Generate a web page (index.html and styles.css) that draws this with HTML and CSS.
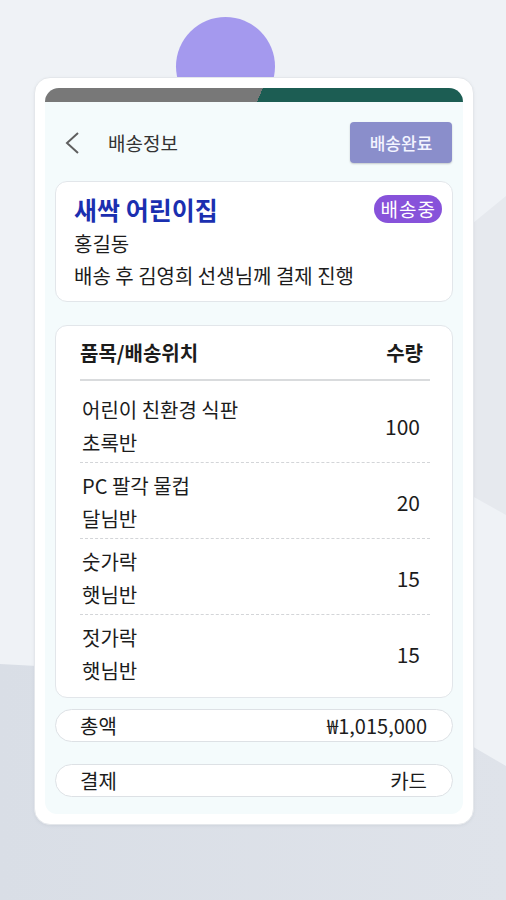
FILE: index.html
```html
<!DOCTYPE HTML>
<html>

<head>
  <meta charset="utf-8">
  <link rel="stylesheet" href="styles.css">
</head>

<body>
  <div class="backdrop">
    <div class="bg-wedge"></div>
    <div class="bg-bottom"></div>
    <div class="bubble"></div>
  </div>

  <div class="card">
    <div class="panel">
      <div class="progress"></div>

      <div class="header">
        <svg class="back" width="14" height="22" viewBox="0 0 14 22">
          <polyline points="13,1 2,11 13,21" fill="none" stroke="#5f5f5f" stroke-width="2"/>
        </svg>
        <span class="header-title">배송정보</span>
        <button class="done-btn">배송완료</button>
      </div>

      <div class="content">
        <div class="info-card">
          <div class="info-top">
            <span class="place">새싹 어린이집</span>
            <span class="badge">배송중</span>
          </div>
          <div class="info-line">홍길동</div>
          <div class="info-line">배송 후 김영희 선생님께 결제 진행</div>
        </div>

        <div class="items-card">
          <div class="items-head">
            <span>품목/배송위치</span>
            <span>수량</span>
          </div>
          <div class="items-list">
            <div class="item">
              <div>
                <div class="item-line">어린이 친환경 식판</div>
                <div class="item-line">초록반</div>
              </div>
              <span class="qty">100</span>
            </div>
            <div class="item">
              <div>
                <div class="item-line">PC 팔각 물컵</div>
                <div class="item-line">달님반</div>
              </div>
              <span class="qty">20</span>
            </div>
            <div class="item">
              <div>
                <div class="item-line">숫가락</div>
                <div class="item-line">햇님반</div>
              </div>
              <span class="qty">15</span>
            </div>
            <div class="item">
              <div>
                <div class="item-line">젓가락</div>
                <div class="item-line">햇님반</div>
              </div>
              <span class="qty">15</span>
            </div>
          </div>
        </div>

        <div class="pill pill-total">
          <span>총액</span>
          <span>₩1,015,000</span>
        </div>
        <div class="pill pill-pay">
          <span>결제</span>
          <span>카드</span>
        </div>
      </div>
    </div>
  </div>
</body>

</html>
```

FILE: styles.css
```css
body {
    margin: 0;
    min-height: 900px;
    position: relative;
    overflow: hidden;
    background-color: #eff2f6;
    font-family: "Noto Sans CJK KR", "Noto Sans", sans-serif;
    color: #1c1c1c;
}

/* decorative background */
.backdrop {
    position: absolute;
    inset: 0;
    overflow: hidden;
}
.bg-wedge {
    position: absolute;
    inset: 0;
    background-color: #e6e9ee;
    clip-path: polygon(440px 250px, 506px 196px, 506px 515px, 440px 478px);
}
.bg-bottom {
    position: absolute;
    inset: 0;
    background: linear-gradient(90deg, #d9dee6, #dfe3ea);
    clip-path: polygon(0 664px, 300px 680px, 470px 745px, 506px 766px, 506px 900px, 0 900px);
}
.bubble {
    position: absolute;
    left: 176px;
    top: 17px;
    width: 99px;
    height: 99px;
    border-radius: 50%;
    background-color: #a499ee;
}

.card {
    position: relative;
    z-index: 1;
    box-sizing: border-box;
    width: 440px;
    margin: 77px 0 0 34px;
    padding: 10px;
    background-color: #fff;
    border: 1px solid #e4e7eb;
    border-radius: 16px;
    box-shadow: 0 1px 3px rgba(120, 130, 150, 0.12);
}
.panel {
    background-color: #f4fbfc;
    border-radius: 14px 14px 12px 12px;
    overflow: hidden;
    padding-bottom: 17px;
}
.progress {
    height: 14px;
    background: linear-gradient(113deg, #787878 51.4%, #1c5d53 51.4%);
}

.header {
    display: flex;
    align-items: center;
    height: 41px;
    padding: 20px 11px 0 20px;
}
.back {
    display: block;
}
.header-title {
    margin-left: 29px;
    font-size: 19px;
    color: #333;
}
.done-btn {
    margin-left: auto;
    width: 102px;
    height: 41px;
    border: none;
    border-radius: 4px;
    background-color: #8a8ecb;
    color: #f3f4ff;
    font-family: inherit;
    font-size: 17px;
    font-weight: 500;
    box-shadow: 0 1px 2px rgba(0, 0, 0, 0.2);
}

.content {
    padding: 18px 10px 0;
}

.info-card {
    background-color: #fff;
    border: 1px solid #e2e6ea;
    border-radius: 12px;
    padding: 12px 10px 9px 18px;
}
.info-top {
    display: flex;
    justify-content: space-between;
    align-items: center;
    height: 30px;
}
.place {
    font-size: 25px;
    font-weight: bold;
    color: #1b2fb0;
    line-height: 30px;
}
.badge {
    background-color: #8752da;
    color: #fff;
    font-size: 19px;
    line-height: 28px;
    padding: 0 6px 0 7px;
    border-radius: 14px;
    letter-spacing: 1px;
}
.info-line {
    font-size: 20px;
    line-height: 32px;
}
.info-top + .info-line {
    margin-top: 4px;
}

.items-card {
    margin-top: 23px;
    background-color: #fff;
    border: 1px solid #e2e6ea;
    border-radius: 12px;
    padding: 12px 22px 7px 24px;
}
.items-head {
    display: flex;
    justify-content: space-between;
    font-size: 20px;
    font-weight: bold;
    line-height: 30px;
    padding: 0 7px 11px 0;
    border-bottom: 2px solid #d9dbdd;
}
.items-list {
    padding-top: 6px;
}
.item {
    display: flex;
    justify-content: space-between;
    align-items: center;
    padding: 6px 10px 3px 2px;
    border-bottom: 1px dashed #d3d5d8;
}
.item:last-child {
    border-bottom: none;
}
.item-line {
    font-size: 20px;
    line-height: 33px;
}
.qty {
    font-size: 21px;
}

.pill {
    box-sizing: border-box;
    display: flex;
    justify-content: space-between;
    align-items: center;
    height: 33px;
    padding: 0 25px 0 24px;
    background-color: #fff;
    border: 1px solid #dde1e5;
    border-radius: 17px;
    font-size: 20px;
}
.pill-total {
    margin-top: 11px;
}
.pill-pay {
    margin-top: 22px;
}
```
